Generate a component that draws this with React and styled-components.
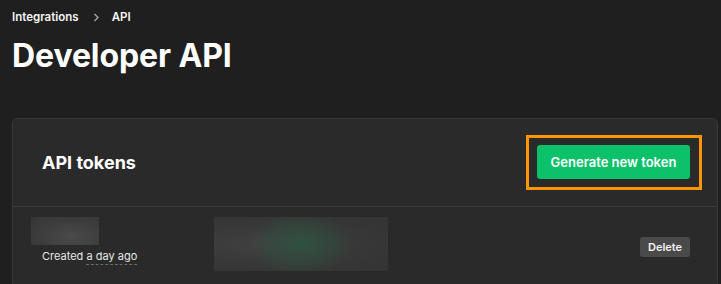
import React from "react";
import styled, { createGlobalStyle } from "styled-components";

const Global = createGlobalStyle`
  html, body { margin: 0; padding: 0; background: #1f1f1f; }
  body { font-family: Inter, "Noto Sans", sans-serif; color: #fff; overflow: hidden; }
`;

const Page = styled.div`
  padding: 9px 3px 0 12px;
  height: 284px;
  box-sizing: border-box;
`;

const Crumbs = styled.nav`
  display: flex;
  align-items: center;
  font-size: 11.5px;
  font-weight: 600;
  height: 16px;
`;

const Crumb = styled.span`
  color: #f4f4f4;
`;

const Sep = styled.span`
  color: #a0a0a0;
  display: inline-flex;
  margin: 0 12px 0 14px;
`;

const Title = styled.h1`
  margin: 11px 0 0;
  font-size: 32px;
  line-height: 40px;
  font-weight: 700;
  letter-spacing: -0.1px;
`;

const Card = styled.section`
  margin-top: 42px;
  background: #2a2a2a;
  border: 1px solid #383838;
  border-radius: 5px;
  overflow: hidden;
`;

const CardHeader = styled.div`
  display: flex;
  align-items: center;
  justify-content: space-between;
  height: 87px;
  padding: 0 15px 0 29px;
  border-bottom: 1px solid #3a3a3a;
`;

const CardTitle = styled.h2`
  margin: 0;
  font-size: 18px;
  font-weight: 700;
`;

const Highlight = styled.div`
  border: 3px solid #ff9500;
  padding: 7px 9px 8px 8px;
`;

const PrimaryButton = styled.button`
  display: block;
  height: 34px;
  width: 153px;
  border: none;
  border-radius: 3px;
  background: #0cc16a;
  color: #fff;
  font-family: inherit;
  font-size: 13px;
  font-weight: 600;
  cursor: pointer;
`;

const Row = styled.div`
  display: flex;
  align-items: flex-start;
  padding: 10px 27px 0 18px;
  height: 70px;
`;

const TokenInfo = styled.div`
  display: flex;
  flex-direction: column;
  width: 183px;
`;

const Blur = styled.div`
  width: ${(p) => p.$w}px;
  height: ${(p) => p.$h}px;
  background: ${(p) => p.$bg};
`;

const Created = styled.div`
  margin: 4px 0 0 11px;
  font-size: 11px;
  line-height: 14px;
  color: #e6e6e6;
  white-space: nowrap;
`;

const Dotted = styled.span`
  padding-bottom: 1px;
  border-bottom: 1px dashed #6a6a6a;
`;

const Spacer = styled.div`
  flex: 1;
`;

const DeleteButton = styled.button`
  margin-top: 20px;
  height: 20px;
  width: 50px;
  border: none;
  border-radius: 3px;
  background: #4a4a4a;
  color: #f2f2f2;
  font-family: inherit;
  font-size: 11px;
  font-weight: 600;
  padding: 0;
`;

export default function App() {
  return (
    <>
      <Global />
      <Page>
        <Crumbs>
          <Crumb>Integrations</Crumb>
          <Sep>
            <svg width="7" height="9" viewBox="0 0 7 9" fill="none">
              <path d="M1.5 1l3.5 3.5L1.5 8" stroke="#a8a8a8" strokeWidth="1.3" />
            </svg>
          </Sep>
          <Crumb>API</Crumb>
        </Crumbs>
        <Title>Developer API</Title>
        <Card>
          <CardHeader>
            <CardTitle>API tokens</CardTitle>
            <Highlight>
              <PrimaryButton>Generate new token</PrimaryButton>
            </Highlight>
          </CardHeader>
          <Row>
            <TokenInfo>
              <Blur
                $w={68}
                $h={28}
                $bg="radial-gradient(ellipse at 60% 70%, #4a4a4a 0%, #3c3c3c 60%, #363636 100%)"
              />
              <Created>
                Created <Dotted>a day ago</Dotted>
              </Created>
            </TokenInfo>
            <Blur
              $w={174}
              $h={54}
              $bg="radial-gradient(ellipse 30% 60% at 50% 50%, #2f5140 0%, rgba(50,70,60,0) 100%), radial-gradient(ellipse at 30% 50%, #414141 0%, #383838 50%, #333333 100%)"
            />
            <Spacer />
            <DeleteButton>Delete</DeleteButton>
          </Row>
        </Card>
      </Page>
    </>
  );
}
